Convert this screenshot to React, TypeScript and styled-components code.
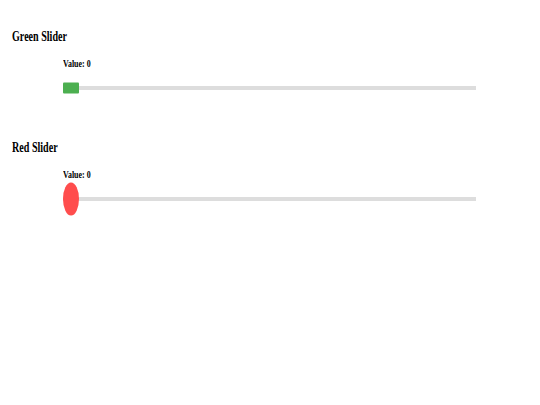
import React from 'react';
import styled, { createGlobalStyle } from 'styled-components';

const GlobalStyle = createGlobalStyle`
    html, body {
        margin: 0;
        padding: 0;
        background: #ffffff;
    }
    body {
        font-family: 'Liberation Serif', 'Times New Roman', serif;
        color: #000000;
    }
`;

const Page = styled.div`
    display: flex;
    flex-direction: column;
    gap: 50px;
    min-height: 100vh;
    box-sizing: border-box;
    padding: 29px 12px 0;
`;

const Section = styled.section`
    display: flex;
    flex-direction: column;
`;

const Heading = styled.h3`
    margin: 0;
    font-size: 14px;
    line-height: 16px;
    font-weight: 700;
    transform: scaleX(0.72);
    transform-origin: 0 50%;
`;

const Control = styled.div`
    margin-left: 51px;
    width: 413px;
    display: flex;
    flex-direction: column;
`;

const Label = styled.p`
    margin: 13px 0 0;
    font-size: 10px;
    line-height: 12px;
    font-weight: 700;
    transform: scaleX(0.79);
    transform-origin: 0 50%;
`;

const Track = styled.div`
    position: relative;
    margin-top: 16px;
    height: 4px;
    background: #dddddd;
`;

type ThumbProps = { $w: number; $h: number; $color: string; $round: boolean };

const Thumb = styled.div<ThumbProps>`
    position: absolute;
    top: 50%;
    width: ${(p) => p.$w}px;
    height: ${(p) => p.$h}px;
    background: ${(p) => p.$color};
    border-radius: ${(p) => (p.$round ? '50%' : '1px')};
    transform: translateY(-50%);
`;

type SliderDef = {
    title: string;
    color: string;
    w: number;
    h: number;
    round: boolean;
};

const sliders: SliderDef[] = [
    { title: 'Green Slider', color: '#4caf50', w: 16, h: 11, round: false },
    { title: 'Red Slider', color: '#ff4d4d', w: 16, h: 33, round: true },
];

const SliderBlock = ({ title, color, w, h, round }: SliderDef) => {
    const [value] = React.useState(0);
    const max = 100;
    return (
        <Section>
            <Heading>{title}</Heading>
            <Control>
                <Label>Value: {value}</Label>
                <Track role="slider" aria-valuemin={0} aria-valuemax={max} aria-valuenow={value}>
                    <Thumb
                        $w={w}
                        $h={h}
                        $color={color}
                        $round={round}
                        style={{ left: `calc(${(value / max) * 100}% - ${(value / max) * w}px)` }}
                    />
                </Track>
            </Control>
        </Section>
    );
};

const App = () => (
    <>
        <GlobalStyle />
        <Page>
            {sliders.map((s) => (
                <SliderBlock key={s.title} {...s} />
            ))}
        </Page>
    </>
);

export default App;
